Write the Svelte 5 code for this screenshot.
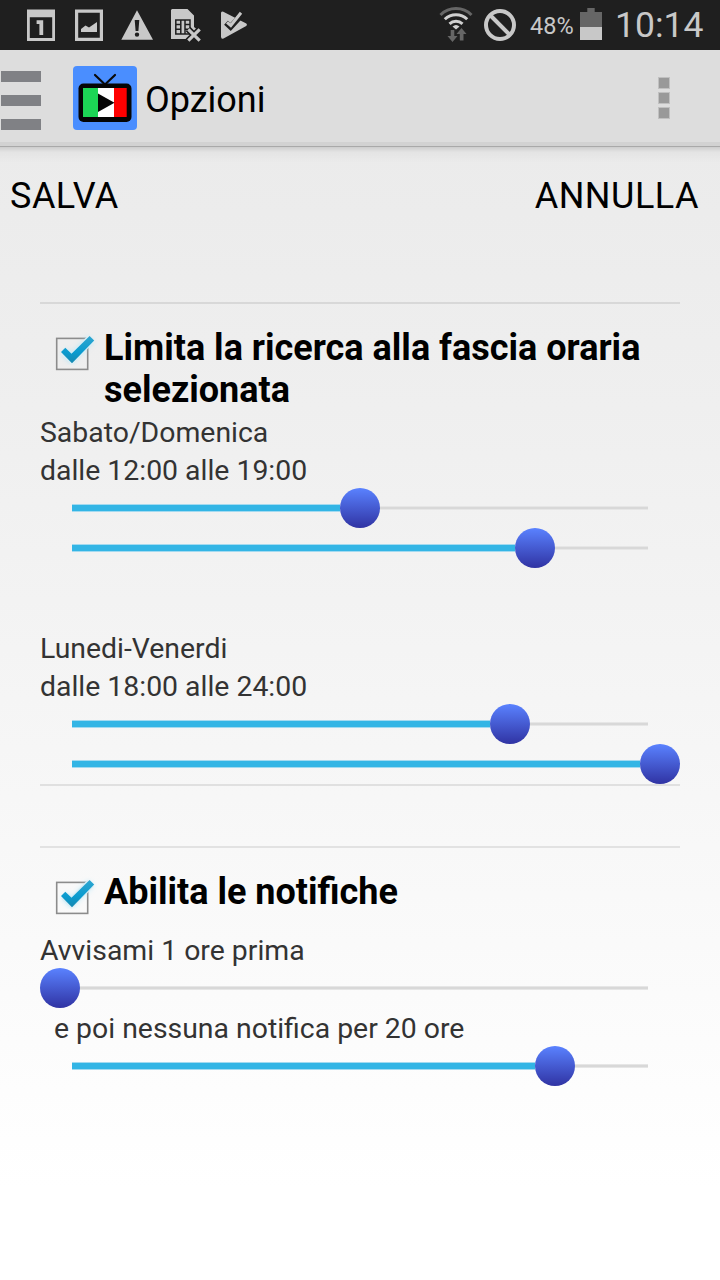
<script>
  const ranges = [
    { id: 'weekend', label: 'Sabato/Domenica', from: 12, to: 19 },
    { id: 'week', label: 'Lunedi-Venerdi', from: 18, to: 24 }
  ];

  // how far a thumb can move, in px
  const TRAVEL = 600;

  let timeRanges = $state(ranges);
  let limitSearch = $state(true);
  let notify = $state(true);
  let hoursBefore = $state(1);
  let hoursSilent = $state(20);

  function offset(value, min, max) {
    return Math.floor(((value - min) / (max - min)) * TRAVEL);
  }
</script>

{#snippet slider(value, min, max)}
  <div class="slider">
    <div class="track"></div>
    <div class="travel">
      <div class="fill" style="width: {offset(value, min, max)}px"></div>
      <div class="thumb"></div>
    </div>
  </div>
{/snippet}

{#snippet checkbox(checked)}
  <svg class="checkbox" width="56" height="48" viewBox="0 0 56 48">
    <defs>
      <linearGradient id="tick" x1="0" y1="0" x2="0" y2="1">
        <stop offset="0" stop-color="#2fa6d0" />
        <stop offset="0.6" stop-color="#0a9bcf" />
        <stop offset="1" stop-color="#1788b0" />
      </linearGradient>
      <filter id="glow" x="-30%" y="-30%" width="160%" height="160%">
        <feGaussianBlur stdDeviation="2.6" />
      </filter>
    </defs>
    <rect x="8.700" y="11.400" width="31" height="31" fill="none" stroke="#8c8c8c" stroke-width="1.600" />
    {#if checked}
      <path d="M16 24.500L23.500 31.500L43 12" fill="none" stroke="#f0f4f5" stroke-width="9" />
      <path d="M16 24.500L23.500 31.500L43 12" fill="none" stroke="#8fdcf8" stroke-width="8" opacity="0.5" filter="url(#glow)" />
      <path d="M13 25L17.300 20.800L23.500 26.800L41.600 9L46.200 13.400L24 36.200Z" fill="url(#tick)" />
    {/if}
  </svg>
{/snippet}

<div class="screen">
  <header class="status">
    <svg width="250" height="50" viewBox="0 0 250 50" fill="#c8c8c8">
      <!-- calendar -->
      <path fill-rule="evenodd" d="M27 9.500H55V41H27ZM29.800 17.300V38H52.200V17.300Z" />
      <path d="M36.600 20.300H43.200V35H39.400V24H36.600Z" />
      <!-- picture -->
      <path fill-rule="evenodd" d="M75 9.500H103V41H75ZM78.200 12.800V37.700H99.800V12.800Z" />
      <path d="M81 32V29L85.500 25.500L89 27.500L97 22V32Z" />
      <!-- warning -->
      <path fill-rule="evenodd" d="M137 10.300L153 39.800H121.300ZM134.700 20L135.600 31H138.400L139.300 20ZM134.800 34.600A2.200 2.200 0 1 0 139.200 34.600A2.200 2.200 0 1 0 134.800 34.600Z" />
      <!-- sim card -->
      <path d="M172 9H187.500L194 15.500V27L199 31L193 39H171V10Z" />
      <g fill="none" stroke="#1f1f1f" stroke-width="1.500">
        <path d="M175.800 20H190V34H175.800ZM175.800 24.600H180.800M175.800 29.200H180.800M180.800 20V34M185 20V34M185 24.600H190M185 29.200H190" />
      </g>
      <path d="M188 29L200 41M200 29L188 41" stroke="#1f1f1f" stroke-width="6.500" />
      <path d="M188.300 29.300L199.700 40.700M199.700 29.300L188.300 40.700" stroke="#c8c8c8" stroke-width="3.200" />
      <!-- play store -->
      <path d="M221 13Q221 10.800 223.300 11.700L246.300 23.500Q247.800 24.800 246.200 25.900L223.500 38.500Q221 39.400 221 36.500Z" />
      <path d="M226 22.800L230.600 27L242.500 14" fill="none" stroke="#1f1f1f" stroke-width="5.600" />
      <path d="M227 22.300L230.800 25.500L241 12.800" fill="none" stroke="#c8c8c8" stroke-width="3" />
    </svg>
    <div class="status-right">
      <svg width="90" height="50" viewBox="435 0 90 50" fill="none">
        <path d="M440.500 15A22 22 0 0 1 471.500 15" stroke="#666" stroke-width="3" />
        <path d="M444.800 19.200A16 16 0 0 1 467.200 19.200" stroke="#d0d0d0" stroke-width="3" />
        <path d="M449.500 23.800A9.500 9.500 0 0 1 462.500 23.800" stroke="#d0d0d0" stroke-width="3" />
        <path d="M452.500 26.500Q456 23.500 459.500 26.500L456 29.500Z" fill="#d0d0d0" />
        <path d="M450.700 30H454.300V36H457.500L452.500 42L447.500 36H450.700ZM459.800 40.500V34H456.500L461.500 28L466.500 34H463.500V40.500Z" fill="#666" />
        <circle cx="500" cy="25" r="14" stroke="#c8c8c8" stroke-width="4" />
        <path d="M490 15L510 35" stroke="#c8c8c8" stroke-width="4" />
      </svg>
      <span class="charge">48%</span>
      <svg class="battery" width="22" height="50" viewBox="0 0 22 50">
        <path d="M7.300 8H14.700V12H22V27H0V12H7.300Z" fill="#666" />
        <rect y="27" width="22" height="13" fill="#c8c8c8" />
      </svg>
      <span class="clock">10:14</span>
    </div>
  </header>

  <nav class="actionbar">
    <div class="drawer">
      <i></i><i></i><i></i>
    </div>
    <svg class="logo" width="64" height="64" viewBox="0 0 64 64">
      <rect width="64" height="64" rx="4" fill="#4a8eff" />
      <path d="M22 9L32 18.500L42 9" fill="none" stroke="#0a0a0a" stroke-width="2.200" stroke-linecap="round" />
      <rect x="5.500" y="17.500" width="53" height="38.500" rx="5" fill="#050505" />
      <rect x="10" y="22" width="15" height="29" fill="#1cd655" />
      <rect x="25" y="22" width="16" height="29" fill="#fff" />
      <rect x="41" y="22" width="12.700" height="29" fill="#f00" />
      <path d="M25 27.500V46L41.500 36.700Z" fill="#050505" />
    </svg>
    <h1>Opzioni</h1>
    <div class="overflow">
      <i></i><i></i><i></i>
    </div>
  </nav>

  <main>
    <div class="buttons">
      <button class="save">SALVA</button>
      <button class="cancel">ANNULLA</button>
    </div>

    <section class="hours">
      <div class="heading">
        {@render checkbox(limitSearch)}
        <h2>Limita la ricerca alla fascia oraria selezionata</h2>
      </div>
      {#each timeRanges as range (range.id)}
        <div class="range">
          <p>{range.label}<br />dalle {range.from}:00 alle {range.to}:00</p>
          {@render slider(range.from, 0, 24)}
          {@render slider(range.to, 0, 24)}
        </div>
      {/each}
    </section>

    <section class="notifications">
      <div class="heading">
        {@render checkbox(notify)}
        <h2>Abilita le notifiche</h2>
      </div>
      <p class="before">Avvisami {hoursBefore} ore prima</p>
      {@render slider(hoursBefore, 1, 24)}
      <p class="silent">e poi nessuna notifica per {hoursSilent} ore</p>
      {@render slider(hoursSilent, 1, 24)}
    </section>
  </main>
</div>

<style>
  :global(body) {
    margin: 0;
    font-family: Roboto, sans-serif;
  }

  .screen {
    width: 720px;
    height: 1280px;
    overflow: hidden;
    display: flex;
    flex-direction: column;
    background: #fff;
  }

  /* Status bar */
  .status {
    height: 50px;
    flex: none;
    display: flex;
    justify-content: space-between;
    background: #1f1f1f;
    color: #c8c8c8;
  }

  .status svg {
    display: block;
    flex: none;
  }

  .status-right {
    display: flex;
    width: 285px;
    line-height: 50px;
  }

  .charge {
    width: 50px;
    padding-left: 5px;
    box-sizing: border-box;
    font-size: 23.5px;
    line-height: 52px;
    white-space: nowrap;
  }

  .battery {
    margin-left: 5px;
  }

  .clock {
    margin-left: 13px;
    font-size: 35.5px;
    white-space: nowrap;
  }

  /* Action bar */
  .actionbar {
    height: 97px;
    flex: none;
    box-sizing: border-box;
    display: flex;
    align-items: center;
    background: #ddd;
    border-bottom: 1px solid #a9a9a9;
    box-shadow: inset 0 -4px #d2d2d2;
  }

  .drawer {
    display: flex;
    flex-direction: column;
    gap: 13px;
    margin: 4px 32px 0 1px;
  }

  .drawer i {
    width: 40px;
    height: 11px;
    background: #808185;
  }

  h1 {
    margin: 3px 0 0 8px;
    font-size: 36px;
    line-height: 42px;
    font-weight: 400;
    color: #000;
  }

  .overflow {
    display: flex;
    flex-direction: column;
    gap: 3px;
    margin: 0 50px 0 auto;
  }

  .overflow i {
    box-sizing: border-box;
    width: 12px;
    height: 12px;
    background: #999;
    border: 1px solid #c0c0c0;
  }

  /* Content */
  main {
    flex: 1;
    background:
      linear-gradient(rgba(0, 0, 0, 0.13), rgba(0, 0, 0, 0.03) 5px, transparent 16px),
      linear-gradient(#ebebeb, #efefef 23%, #f3f3f3 40%, #fff 92%);
  }

  .buttons {
    height: 97px;
    display: flex;
    justify-content: space-between;
    padding: 0 21px 0 10px;
  }

  button {
    padding: 0;
    border: 0;
    background: none;
    font: 400 36px/98px Roboto, sans-serif;
    letter-spacing: 0.5px;
    color: #000;
  }

  section {
    margin: 0 40px;
    border-top: 2px solid #d8d8d8;
  }

  .hours {
    margin-top: 58px;
    border-bottom: 2px solid #e0e0e0;
  }

  .notifications {
    margin-top: 60px;
    border-color: #e2e2e2;
  }

  .heading {
    display: flex;
    padding-top: 23px;
    padding-left: 8px;
  }

  .checkbox {
    flex: none;
    display: block;
  }

  h2 {
    margin: 0;
    font-size: 36px;
    line-height: 42px;
    font-weight: 700;
    color: #000;
  }

  .range {
    padding-top: 3px;
  }

  .range + .range {
    padding-top: 62px;
  }

  p {
    margin: 0;
    font-size: 28.4px;
    line-height: 38px;
    color: #333;
  }

  .range p {
    height: 74px;
  }

  .before {
    height: 36px;
    padding-top: 13px;
  }

  .silent {
    height: 36px;
    padding: 2px 0 0 14px;
  }

  /* Seek bars: the thumb overhangs the track by 32px on each side */
  .slider {
    height: 40px;
    display: grid;
    align-items: center;
  }

  .track,
  .travel {
    grid-area: 1 / 1;
  }

  .track {
    height: 4px;
    margin: 0 32px;
    background: linear-gradient(#e6e6e6 1px, #d8d8d8 1px, #d8d8d8 3px, #e6e6e6 3px);
  }

  .travel {
    display: flex;
    align-items: center;
  }

  .fill {
    height: 8px;
    flex: none;
    background: linear-gradient(#a3daf0 1px, #33b5e5 1px, #33b5e5 7px, #a3daf0 7px) 32px 0 no-repeat;
  }

  .thumb {
    width: 40px;
    height: 40px;
    flex: none;
    border-radius: 50%;
    background: linear-gradient(#5a82ff, #3033a3);
  }
</style>
